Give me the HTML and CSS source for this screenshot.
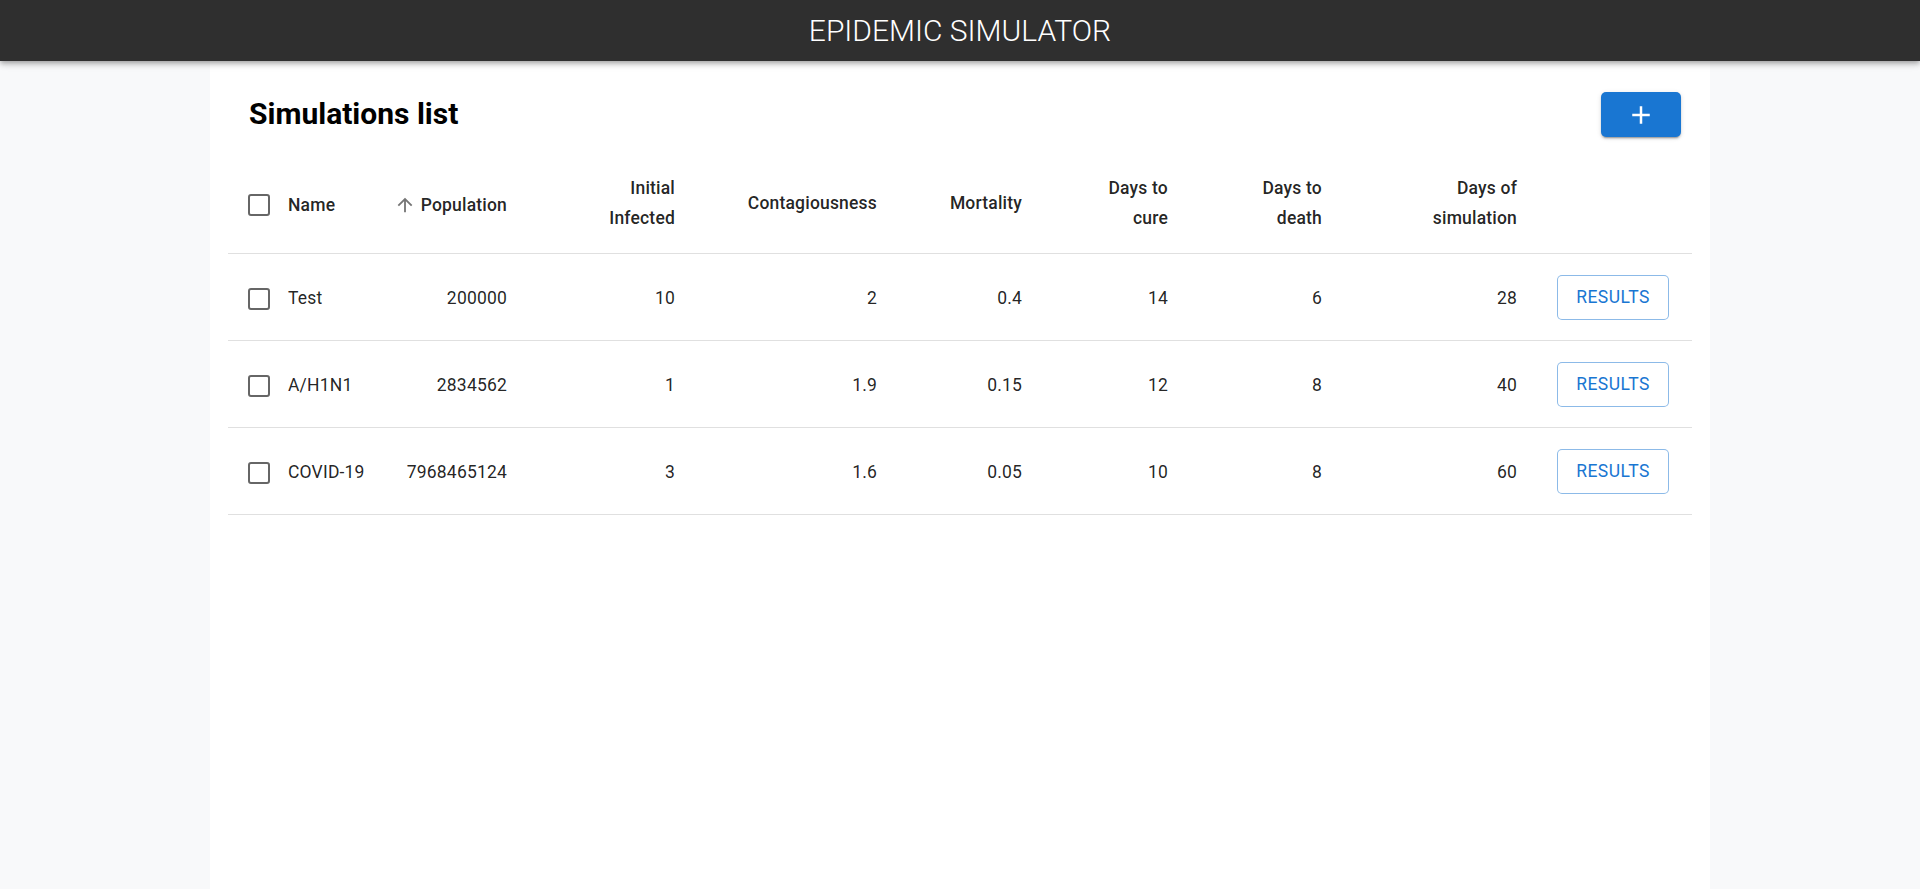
FILE: index.html
```html
<!DOCTYPE html>
<html lang="en">
<head>
<meta charset="utf-8">
<title>Epidemic Simulator</title>
<link rel="stylesheet" href="styles.css">
</head>
<body>
<header class="appbar">
  <h1 class="appbar-title">EPIDEMIC SIMULATOR</h1>
</header>
<main class="page">
  <section class="panel">
    <div class="toolbar">
      <h2 class="title">Simulations list</h2>
      <button class="add-btn" type="button" aria-label="Add">
        <svg viewBox="0 0 24 24" width="30" height="30"><path fill="#fff" d="M19 13h-6v6h-2v-6H5v-2h6V5h2v6h6v2z"/></svg>
      </button>
    </div>
    <table class="sim-table">
      <colgroup>
        <col class="c-check"><col class="c-name"><col class="c-pop"><col class="c-init"><col class="c-cont"><col class="c-mort"><col class="c-cure"><col class="c-death"><col class="c-sim"><col class="c-res">
      </colgroup>
      <thead>
        <tr>
          <th class="cell-check"><span class="checkbox"><span class="box"></span></span></th>
          <th class="cell-name">Name</th>
          <th class="num"><span class="sort-label">Population<svg class="sort-icon" viewBox="0 0 24 24" width="22" height="22"><path d="M4 12l1.41 1.41L11 7.83V20h2V7.83l5.58 5.59L20 12l-8-8-8 8z"/></svg></span></th>
          <th class="num">Initial<br>Infected</th>
          <th class="num">Contagiousness</th>
          <th class="num">Mortality</th>
          <th class="num">Days to<br>cure</th>
          <th class="num">Days to<br>death</th>
          <th class="num">Days of<br>simulation</th>
          <th></th>
        </tr>
      </thead>
      <tbody>
        <tr>
          <td class="cell-check"><span class="checkbox"><span class="box"></span></span></td>
          <td class="cell-name">Test</td>
          <td class="num">200000</td>
          <td class="num">10</td>
          <td class="num">2</td>
          <td class="num">0.4</td>
          <td class="num">14</td>
          <td class="num">6</td>
          <td class="num">28</td>
          <td class="cell-action"><button class="res-btn" type="button">Results</button></td>
        </tr>
        <tr>
          <td class="cell-check"><span class="checkbox"><span class="box"></span></span></td>
          <td class="cell-name">A/H1N1</td>
          <td class="num">2834562</td>
          <td class="num">1</td>
          <td class="num">1.9</td>
          <td class="num">0.15</td>
          <td class="num">12</td>
          <td class="num">8</td>
          <td class="num">40</td>
          <td class="cell-action"><button class="res-btn" type="button">Results</button></td>
        </tr>
        <tr>
          <td class="cell-check"><span class="checkbox"><span class="box"></span></span></td>
          <td class="cell-name">COVID-19</td>
          <td class="num">7968465124</td>
          <td class="num">3</td>
          <td class="num">1.6</td>
          <td class="num">0.05</td>
          <td class="num">10</td>
          <td class="num">8</td>
          <td class="num">60</td>
          <td class="cell-action"><button class="res-btn" type="button">Results</button></td>
        </tr>
      </tbody>
    </table>
  </section>
</main>
</body>
</html>
```
FILE: styles.css
```css
* { box-sizing: border-box; }
html, body { margin: 0; padding: 0; }
body {
  font-family: Roboto, "Liberation Sans", Arial, sans-serif;
  background: #f8f9fa;
  color: rgba(0, 0, 0, 0.87);
}
.appbar {
  height: 61px;
  background: #2f2f2f;
  display: flex;
  align-items: center;
  justify-content: center;
  box-shadow: 0 2px 4px -1px rgba(0,0,0,0.2), 0 4px 5px 0 rgba(0,0,0,0.14), 0 1px 10px 0 rgba(0,0,0,0.12);
  position: relative;
  z-index: 1;
}
.appbar-title {
  margin: 0;
  font-size: 30px;
  font-weight: 300;
  color: #fff;
  line-height: 1;
  letter-spacing: 0;
}
.page {
  display: flex;
  justify-content: center;
  min-height: calc(100vh - 61px);
}
.panel {
  width: 1500px;
  background: #fff;
  padding: 31px 18px 0;
}
.toolbar {
  display: flex;
  align-items: center;
  justify-content: space-between;
  padding: 0 11px 0 21px;
  margin-bottom: 16px;
}
.title {
  margin: 0;
  font-size: 30px;
  font-weight: 700;
  line-height: 1.2;
  color: #000;
  position: relative;
  top: -1px;
}
.add-btn {
  width: 80px;
  height: 45px;
  border: 0;
  border-radius: 5px;
  background: #1976d2;
  display: flex;
  align-items: center;
  justify-content: center;
  padding: 0;
  box-shadow: 0 3px 1px -2px rgba(0,0,0,0.2), 0 2px 2px 0 rgba(0,0,0,0.14), 0 1px 5px 0 rgba(0,0,0,0.12);
  cursor: pointer;
}
.sim-table {
  width: 100%;
  border-collapse: collapse;
  table-layout: fixed;
}
.c-check { width: 60px; }
.c-name { width: 80px; }
.c-pop { width: 159px; }
.c-init { width: 168px; }
.c-cont { width: 202px; }
.c-mort { width: 145px; }
.c-cure { width: 146px; }
.c-death { width: 154px; }
.c-sim { width: 195px; }
.c-res { width: 155px; }
.sim-table th,
.sim-table td {
  border-bottom: 1px solid #e0e0e0;
  padding: 20px;
  font-size: 17.5px;
  letter-spacing: 0.01071em;
  text-align: left;
  vertical-align: middle;
  color: rgba(0, 0, 0, 0.87);
}
.sim-table th {
  font-weight: 500;
  line-height: 30px;
}
.sim-table td {
  font-weight: 400;
  line-height: 25px;
  padding-top: 22px;
  padding-bottom: 19px;
}
.sim-table td.cell-action {
  padding-top: 21px;
  padding-bottom: 20px;
}
.sim-table .num { text-align: right; }
.sim-table .cell-check { padding: 0 0 0 5px; }
.sim-table .cell-name { padding: 0; }
.sim-table th.cell-check,
.sim-table th.cell-name { padding-top: 3px; }
.sim-table td.cell-check,
.sim-table td.cell-name { padding-top: 3px; }
.sim-table th .sort-label {
  vertical-align: top;
  height: 30px;
  position: relative;
  top: 2px;
}
.checkbox {
  display: flex;
  width: 52px;
  height: 52px;
  align-items: center;
  justify-content: center;
}
.box {
  width: 22px;
  height: 22px;
  border: 2.5px solid rgba(0, 0, 0, 0.6);
  border-radius: 3px;
}
.sort-label {
  display: inline-flex;
  flex-direction: row-reverse;
  align-items: center;
}
.sort-icon {
  fill: rgba(0, 0, 0, 0.54);
  margin: 0 5px;
}
.res-btn {
  font-family: Roboto, "Liberation Sans", Arial, sans-serif;
  font-size: 17.5px;
  font-weight: 400;
  letter-spacing: 0.02857em;
  text-transform: uppercase;
  color: #1976d2;
  background: #fff;
  border: 1px solid rgba(25, 118, 210, 0.5);
  border-radius: 5px;
  height: 45px;
  width: 112px;
  padding: 0;
  line-height: 1;
  cursor: pointer;
}
```
